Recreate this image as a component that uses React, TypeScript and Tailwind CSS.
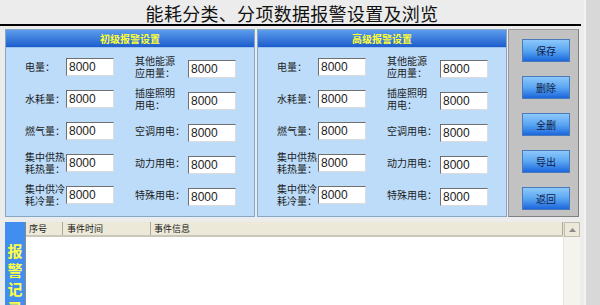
import React from "react";

const CJK = { fontFamily: '"Noto Sans CJK SC", "Liberation Sans", sans-serif' };

type Field = { a: string; b: string };

const ROWS: Field[] = [
  { a: "电量：", b: "其他能源\n应用量：" },
  { a: "水耗量：", b: "插座照明\n用电：" },
  { a: "燃气量：", b: "空调用电：" },
  { a: "集中供热\n耗热量：", b: "动力用电：" },
  { a: "集中供冷\n耗冷量：", b: "特殊用电：" },
];

const BUTTONS = ["保存", "删除", "全删", "导出", "返回"];

function ValueBox({ value, className = "" }: { value: string; className?: string }) {
  return (
    <input
      readOnly
      defaultValue={value}
      className={`w-[48px] h-[18px] bg-white border border-t-[#6f6f6f] border-l-[#6f6f6f] border-b-[#dcdcdc] border-r-[#dcdcdc] px-[2px] text-[12px] text-[#222] outline-none font-['Liberation_Sans'] ${className}`}
    />
  );
}

function Label({ text, className = "" }: { text: string; className?: string }) {
  return (
    <div
      className={`text-[10px] leading-[12px] text-[#1c1c1c] whitespace-pre-line ${className}`}
      style={CJK}
    >
      {text}
    </div>
  );
}

function AlarmPanel({ title }: { title: string }) {
  return (
    <div className="w-[250px] h-full flex flex-col bg-[#bcdcfa] border border-[#86a6c6]">
      {/* header bar */}
      <div className="h-[18px] shrink-0 flex items-center justify-center bg-gradient-to-b from-[#5c9cec] to-[#1d5dcc] border-b border-[#9cc4f0]">
        <span className="text-[10px] font-bold text-[#ffff33]" style={CJK}>
          {title}
        </span>
      </div>
      <div className="flex flex-col pt-[3px]">
        {ROWS.map((r, i) => (
          <div key={i} className="h-[32px] shrink-0 flex items-center pl-[19px]">
            <Label text={r.a} className="w-[41px]" />
            <ValueBox value="8000" />
            <Label text={r.b} className="w-[53px] ml-[21px]" />
            <ValueBox value="8000" className="mt-[3px]" />
          </div>
        ))}
      </div>
    </div>
  );
}

export default function App() {
  return (
    <div className="w-[600px] h-[305px] overflow-hidden flex bg-[#ececec]">
      <div className="w-[584px] h-full flex flex-col">
        {/* title */}
        <div className="h-[24px] shrink-0 flex items-center justify-center pt-[2px]">
          <h1 className="text-[18px] tracking-[0.3px] text-[#111] leading-[22px]" style={CJK}>
            能耗分类、分项数据报警设置及浏览
          </h1>
        </div>
        <div className="h-[2px] shrink-0 w-[581px] bg-black" />

        {/* settings */}
        <div className="mt-[3px] h-[188px] shrink-0 flex pl-[5px]">
          <AlarmPanel title="初级报警设置" />
          <div className="w-[2px]" />
          <AlarmPanel title="高级报警设置" />
          <div className="w-[1px]" />
          <div className="w-[71px] h-full bg-[#c2c2c2] border border-[#9a9a9a] border-r-[#808080] border-b-[#808080] flex flex-col pl-[13px] pt-[9px] gap-[14px]">
            {BUTTONS.map((b) => (
              <button
                key={b}
                className="w-[48px] h-[23px] shrink-0 bg-gradient-to-b from-[#8cc8fa] via-[#5aa6f2] to-[#1c66dc] border border-[#4a7ab8] text-[10px] text-[#10204a]"
                style={CJK}
              >
                {b}
              </button>
            ))}
          </div>
        </div>

        {/* alarm records */}
        <div className="mt-[5px] flex-1 min-h-0 flex pl-[5px]">
          <div className="w-[20px] h-full overflow-hidden bg-[#3f8ef0] flex flex-col items-center pt-[19px]">
            {"报警记录".split("").map((c) => (
              <span key={c} className="shrink-0 text-[15px] leading-[19px] font-bold text-[#ffff44]" style={CJK}>
                {c}
              </span>
            ))}
          </div>
          <div className="w-[555px] h-full flex bg-white border-l border-[#8a8a8a]">
            <div className="flex-1 flex flex-col">
              <div className="h-[15px] shrink-0 flex bg-[#ece9d8] border-b-2 border-[#cbc7b8] text-[9px] text-[#222]" style={CJK}>
                <div className="w-[37px] pl-[3px] flex items-center border-r border-[#aca899]">序号</div>
                <div className="w-[88px] pl-[4px] flex items-center border-r border-[#aca899]">事件时间</div>
                <div className="flex-1 pl-[3px] flex items-center border-r border-[#aca899]">事件信息</div>
              </div>
              <div className="flex-1 bg-white" />
            </div>
            {/* scrollbar */}
            <div className="w-[17px] h-full flex flex-col bg-[#f4f3ee] border-l border-[#e6e4da]">
              <div className="h-[15px] shrink-0 flex items-center justify-center bg-[#ece9d8] border border-[#c0bdae]">
                <svg width="7" height="4" viewBox="0 0 7 4">
                  <path d="M0 4 L3.5 0 L7 4 Z" fill="#8a8a8a" />
                </svg>
              </div>
            </div>
          </div>
        </div>
      </div>
      <div className="flex-1 bg-[#d8d8d8] border-l-2 border-[#f4f4f4]" />
    </div>
  );
}
